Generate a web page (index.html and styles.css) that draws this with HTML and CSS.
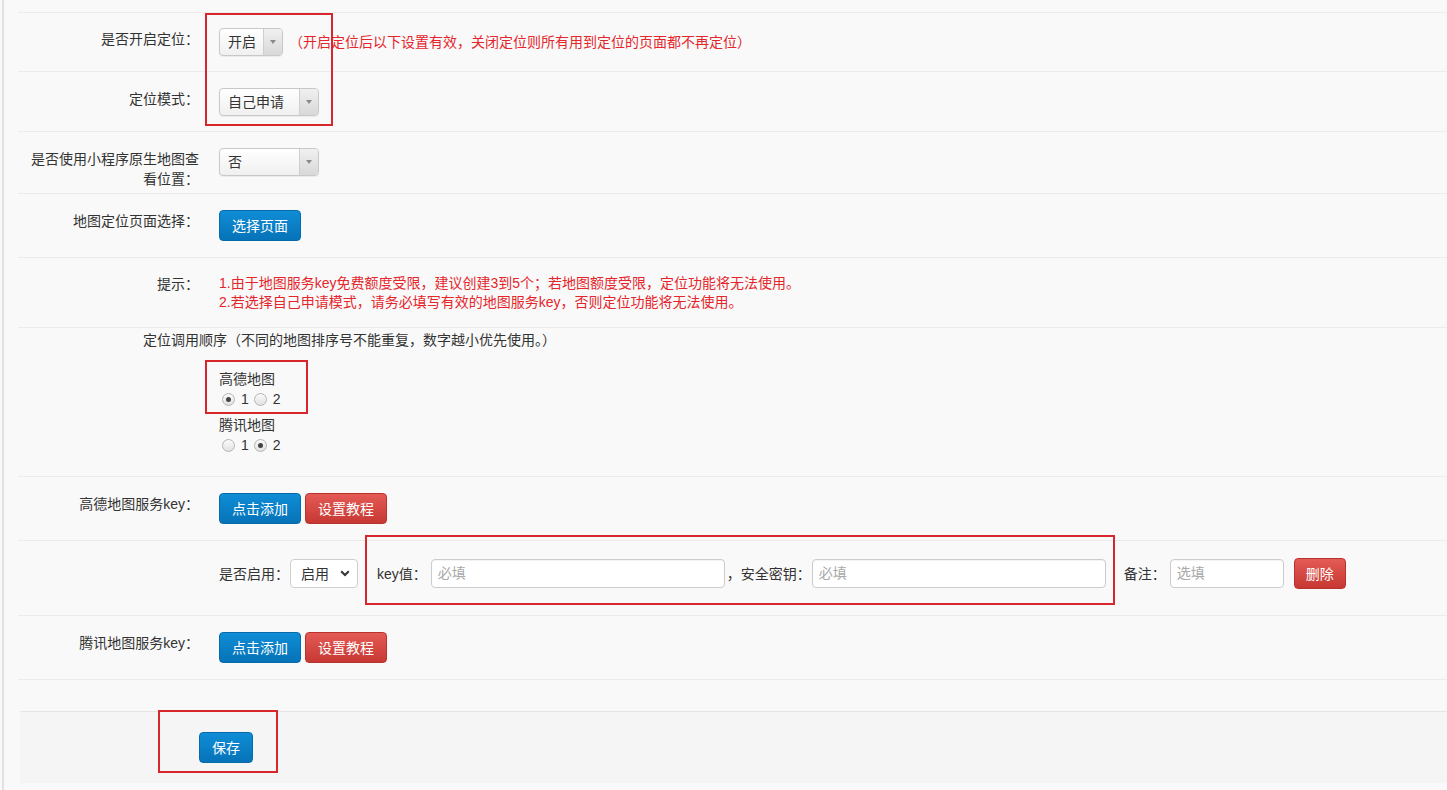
FILE: index.html
```html
<!DOCTYPE html>
<html lang="zh-CN">
<head>
<meta charset="utf-8">
<title>定位设置</title>
<link rel="stylesheet" href="styles.css">
</head>
<body>
<div class="page">
  <div class="form">
    <div class="row top-tail"></div>

    <div class="row row-first">
      <div class="lbl">是否开启定位：</div>
      <div class="ctl">
        <div class="csel w63"><span class="csel-text">开启</span><span class="csel-arrow"><i></i></span></div>
        <span class="hint-inline">（开启定位后以下设置有效，关闭定位则所有用到定位的页面都不再定位）</span>
      </div>
    </div>

    <div class="row">
      <div class="lbl">定位模式：</div>
      <div class="ctl">
        <div class="csel w99"><span class="csel-text">自己申请</span><span class="csel-arrow"><i></i></span></div>
      </div>
    </div>

    <div class="row row-tall">
      <div class="lbl">是否使用小程序原生地图查看位置：</div>
      <div class="ctl">
        <div class="csel w99"><span class="csel-text">否</span><span class="csel-arrow"><i></i></span></div>
      </div>
    </div>

    <div class="row row-btn">
      <div class="lbl">地图定位页面选择：</div>
      <div class="ctl">
        <button class="btn btn-blue">选择页面</button>
      </div>
    </div>

    <div class="row row-hint">
      <div class="lbl">提示：</div>
      <div class="ctl hint-block">
        <p>1.由于地图服务key免费额度受限，建议创建3到5个；若地图额度受限，定位功能将无法使用。</p>
        <p>2.若选择自己申请模式，请务必填写有效的地图服务key，否则定位功能将无法使用。</p>
      </div>
    </div>

    <div class="row row-order">
      <div class="order-title">定位调用顺序（不同的地图排序号不能重复，数字越小优先使用。）</div>
      <div class="order-list">
        <div class="order-item">
          <div class="order-name">高德地图</div>
          <div class="radios">
            <span class="radio on"></span><span class="rlabel">1</span>
            <span class="radio"></span><span class="rlabel">2</span>
          </div>
        </div>
        <div class="order-item">
          <div class="order-name">腾讯地图</div>
          <div class="radios">
            <span class="radio"></span><span class="rlabel">1</span>
            <span class="radio on"></span><span class="rlabel">2</span>
          </div>
        </div>
      </div>
    </div>

    <div class="row row-btn">
      <div class="lbl">高德地图服务key：</div>
      <div class="ctl">
        <button class="btn btn-blue">点击添加</button>
        <button class="btn btn-red">设置教程</button>
      </div>
    </div>

    <div class="row row-keys">
      <div class="lbl"></div>
      <div class="ctl keyline">
        <span class="t">是否启用：</span>
        <div class="nsel"><span>启用</span><svg width="10" height="7" viewBox="0 0 10 7"><path d="M1.2 1.3 L5 5 L8.8 1.3" fill="none" stroke="#333" stroke-width="2"/></svg></div>
        <span class="t t-key">key值：</span>
        <div class="inp w293">必填</div>
        <span class="t t-comma">，安全密钥：</span>
        <div class="inp w293">必填</div>
        <span class="t t-note">备注：</span>
        <div class="inp w113">选填</div>
        <button class="btn btn-red btn-del">删除</button>
      </div>
    </div>

    <div class="row row-btn">
      <div class="lbl">腾讯地图服务key：</div>
      <div class="ctl">
        <button class="btn btn-blue">点击添加</button>
        <button class="btn btn-red">设置教程</button>
      </div>
    </div>
  </div>

  <div class="footer">
    <button class="btn btn-blue">保存</button>
  </div>

  <div class="mark m1"></div>
  <div class="mark m2"></div>
  <div class="mark m3"></div>
  <div class="mark m4"></div>
</div>
</body>
</html>
```

FILE: styles.css
```css
* { box-sizing: border-box; }
html, body {
  margin: 0;
  padding: 0;
  background: #f9f9f9;
}
body {
  font-family: "Liberation Sans", "Noto Sans CJK SC", sans-serif;
  font-size: 14px;
  line-height: 20px;
  color: #333;
}
.page {
  position: relative;
  margin-left: 2px;
  border-left: 2px solid #e1e1e1;
  padding-left: 14px;
  min-height: 790px;
}
.form { display: flex; flex-direction: column; }
.row {
  display: flex;
  align-items: flex-start;
  border-bottom: 1px solid #ececec;
  padding: 16px 0 15px;
}
.row.top-tail { height: 13px; padding: 0; }
.row-first { padding: 15px 0 15px; }
.row-tall { padding-bottom: 17px; }
.row-btn { padding: 16px 0 16px; }
.row-hint { padding: 16px 0 15px; }
.row-keys { padding: 17px 0 26px; }
.lbl {
  width: 170px;
  margin-left: 11px;
  margin-right: 20px;
  flex: none;
  text-align: right;
  height: 20px;
  padding-top: 1px;
  color: #333;
}
.row-hint .lbl { padding-top: 0; }
.ctl { display: flex; align-items: center; }

/* chosen-like select */
.csel {
  display: flex;
  height: 28px;
  border: 1px solid #c8c8c8;
  border-radius: 4px;
  background: linear-gradient(#ffffff, #f0f0f0);
  overflow: hidden;
  box-shadow: 0 1px 1px rgba(0,0,0,0.06);
}
.csel.w63 { width: 64px; }
.csel.w99 { width: 100px; }
.csel-text {
  flex: 1;
  padding-left: 8px;
  line-height: 26px;
  color: #333;
}
.csel-arrow {
  width: 19px;
  border-left: 1px solid #cfcfcf;
  background: linear-gradient(#f0f0f0, #d8d8d8);
  display: flex;
  align-items: center;
  justify-content: center;
}
.csel-arrow i {
  width: 0; height: 0;
  border-left: 3px solid transparent;
  border-right: 3px solid transparent;
  border-top: 4px solid #8a8a8a;
}
.hint-inline {
  color: #e4262c;
  margin-left: 6px;
}

/* buttons */
.btn {
  font-family: inherit;
  font-size: 14px;
  line-height: 20px;
  height: 31px;
  padding: 4px 12px;
  border-radius: 4px;
  color: #fff;
  cursor: pointer;
  margin: 0;
}
.btn-blue {
  background: linear-gradient(#0f8dd6, #0673b8);
  border: 1px solid #066aa9;
}
.btn-red {
  background: linear-gradient(#e45a54, #c73833);
  border: 1px solid #b9332e;
  margin-left: 4px;
}

/* hint */
.hint-block { display: block; color: #e4262c; }
.hint-block p { margin: 0; line-height: 19px; }

/* order */
.row-order {
  flex-direction: column;
  padding: 2px 0 14px;
}
.order-title { margin-left: 125px; }
.order-list { margin-left: 201px; margin-top: 20px; }
.order-item { margin-bottom: 7px; }
.order-name { line-height: 19px; }
.radios { display: flex; align-items: center; height: 20px; }
.radio {
  width: 13px; height: 13px;
  border-radius: 50%;
  border: 1px solid #b5b5b5;
  background: linear-gradient(#fafafa, #e2e2e2);
  margin-left: 3px;
  display: flex;
  align-items: center;
  justify-content: center;
}
.radio.on::after {
  content: "";
  width: 5px; height: 5px;
  border-radius: 50%;
  background: #444;
}
.rlabel { margin-left: 6px; margin-right: 2px; }

/* key line */
.keyline { height: 31px; }
.t { white-space: nowrap; }
.nsel {
  margin-left: 1px;
  width: 68px;
  height: 29px;
  border: 1px solid #cfcfcf;
  border-radius: 4px;
  background: #fff;
  display: flex;
  align-items: center;
  justify-content: space-between;
  padding: 0 7px 0 10px;
}
.t-key { margin-left: 19px; margin-right: 4px; }
.t-comma { margin-left: 2px; margin-right: 1px; }
.t-note { margin-left: 18px; margin-right: 4px; }
.inp {
  height: 29px;
  border: 1px solid #cccccc;
  border-radius: 4px;
  background: #fff;
  color: #a9a9a9;
  padding-left: 6px;
  line-height: 27px;
  box-shadow: inset 0 1px 1px rgba(0,0,0,0.05);
}
.inp.w293 { width: 294px; }
.inp.w113 { width: 114px; }
.btn-del { margin-left: 10px; padding: 4px 11px; }

/* footer */
.footer {
  margin-top: 31px;
  margin-left: 2px;
  background: #f5f5f5;
  border-top: 1px solid #e5e5e5;
  padding: 20px 20px 20px 179px;
}

/* red annotation boxes */
.mark {
  position: absolute;
  border: 2px solid #d7262c;
}
.m1 { left: 201px; top: 13px; width: 128px; height: 113px; }
.m2 { left: 201px; top: 360px; width: 103px; height: 54px; }
.m3 { left: 361px; top: 535px; width: 750px; height: 70px; }
.m4 { left: 154px; top: 710px; width: 120px; height: 63px; }
```
